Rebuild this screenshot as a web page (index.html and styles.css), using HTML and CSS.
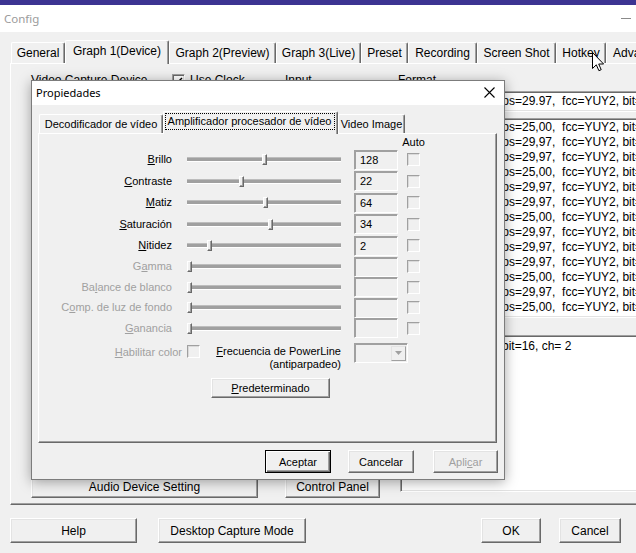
FILE: index.html
```html
<!DOCTYPE html>
<html lang="es">
<head>
<meta charset="utf-8">
<title>Config</title>
<link rel="stylesheet" href="styles.css">
</head>
<body>
<div class="win">
  <div class="titlebar"><span class="title">Config</span><span class="min"></span></div>
  <div class="tabs">
    <div class="tab t1">General</div>
    <div class="tab t2 sel">Graph 1(Device)</div>
    <div class="tab t3">Graph 2(Preview)</div>
    <div class="tab t4">Graph 3(Live)</div>
    <div class="tab t5">Preset</div>
    <div class="tab t6">Recording</div>
    <div class="tab t7">Screen Shot</div>
    <div class="tab t8">Hotkey</div>
    <div class="tab t9">Advanced</div>
  </div>
  <div class="pane">
    <div class="cap-head">
      <span class="h-dev">Video Capture Device</span>
      <span class="h-clock"><span class="chk on"><svg viewBox="0 0 11 11" width="11" height="11"><path d="M2 5.5l2.2 2.3L9 3" fill="none" stroke="#000" stroke-width="1.4"/></svg></span>Use Clock</span>
      <span class="h-input">Input</span>
      <span class="h-format">Format</span>
    </div>
    <div class="cap-body">
      <div class="cap-left">
        <button class="btn b-audio">Audio Device Setting</button>
        <button class="btn b-cp">Control Panel</button>
      </div>
      <div class="cap-right">
        <div class="combo"><span class="pre">720x480,</span>fps=29.97,&nbsp; fcc=YUY2, bit=16</div>
        <div class="list">
          <div class="lrow"><span class="pre">720x576,</span>fps=25,00,&nbsp; fcc=YUY2, bit=16</div>
          <div class="lrow"><span class="pre">720x480,</span>fps=29,97,&nbsp; fcc=YUY2, bit=16</div>
          <div class="lrow"><span class="pre">640x480,</span>fps=29,97,&nbsp; fcc=YUY2, bit=16</div>
          <div class="lrow"><span class="pre">768x576,</span>fps=25,00,&nbsp; fcc=YUY2, bit=16</div>
          <div class="lrow"><span class="pre">320x240,</span>fps=29,97,&nbsp; fcc=YUY2, bit=16</div>
          <div class="lrow"><span class="pre">352x240,</span>fps=29,97,&nbsp; fcc=YUY2, bit=16</div>
          <div class="lrow"><span class="pre">352x288,</span>fps=25,00,&nbsp; fcc=YUY2, bit=16</div>
          <div class="lrow"><span class="pre">160x120,</span>fps=29,97,&nbsp; fcc=YUY2, bit=16</div>
          <div class="lrow"><span class="pre">176x144,</span>fps=29,97,&nbsp; fcc=YUY2, bit=16</div>
          <div class="lrow"><span class="pre">640x360,</span>fps=29,97,&nbsp; fcc=YUY2, bit=16</div>
          <div class="lrow"><span class="pre">720x288,</span>fps=25,00,&nbsp; fcc=YUY2, bit=16</div>
          <div class="lrow"><span class="pre">720x240,</span>fps=29,97,&nbsp; fcc=YUY2, bit=16</div>
          <div class="lrow"><span class="pre">704x576,</span>fps=25,00,&nbsp; fcc=YUY2, bit=16</div>
        </div>
        <div class="field"><span class="pre pre-f">48000Hz,</span>bit=16, ch= 2</div>
      </div>
    </div>
  </div>
  <div class="footer">
    <button class="btn f-help">Help</button>
    <button class="btn f-desk">Desktop Capture Mode</button>
    <span class="grow"></span>
    <button class="btn f-ok">OK</button>
    <button class="btn f-cancel">Cancel</button>
  </div>
</div>

<div class="dlg">
  <div class="dlg-title">
    <span class="dlg-name">Propiedades</span>
    <svg class="dlg-close" viewBox="0 0 11 11" width="11" height="11"><path d="M0.5 0.5L10.5 10.5M10.5 0.5L0.5 10.5" stroke="#000" stroke-width="1.1"/></svg>
  </div>
  <div class="dlg-body">
    <div class="itabs">
      <div class="itab i1">Decodificador de vídeo</div>
      <div class="itab i2 sel"><span class="focus">Amplificador procesador de vídeo</span></div>
      <div class="itab i3">Video Image</div>
    </div>
    <div class="ipane">
      <div class="props">
        <span class="auto">Auto</span>

        <span class="lbl"><u>B</u>rillo</span>
        <span class="slider"><span class="thumb" style="left:75px"></span></span>
        <span class="edit">128</span>
        <span class="cb"></span>

        <span class="lbl"><u>C</u>ontraste</span>
        <span class="slider"><span class="thumb" style="left:52px"></span></span>
        <span class="edit">22</span>
        <span class="cb"></span>

        <span class="lbl"><u>M</u>atiz</span>
        <span class="slider"><span class="thumb" style="left:76px"></span></span>
        <span class="edit">64</span>
        <span class="cb"></span>

        <span class="lbl"><u>S</u>aturación</span>
        <span class="slider"><span class="thumb" style="left:81px"></span></span>
        <span class="edit">34</span>
        <span class="cb"></span>

        <span class="lbl"><u>N</u>itidez</span>
        <span class="slider"><span class="thumb" style="left:20px"></span></span>
        <span class="edit">2</span>
        <span class="cb"></span>

        <span class="lbl dis">G<u>a</u>mma</span>
        <span class="slider"><span class="thumb" style="left:0px"></span></span>
        <span class="edit"></span>
        <span class="cb"></span>

        <span class="lbl dis">Ba<u>l</u>ance de blanco</span>
        <span class="slider"><span class="thumb" style="left:0px"></span></span>
        <span class="edit"></span>
        <span class="cb"></span>

        <span class="lbl dis">C<u>o</u>mp. de luz de fondo</span>
        <span class="slider"><span class="thumb" style="left:0px"></span></span>
        <span class="edit"></span>
        <span class="cb"></span>

        <span class="lbl dis"><u>G</u>anancia</span>
        <span class="slider"><span class="thumb" style="left:0px"></span></span>
        <span class="edit"></span>
        <span class="cb"></span>

        <span class="lbl dis last"><u>H</u>abilitar color</span>
        <span class="lastmid">
          <span class="cb"></span>
          <span class="freq"><u>F</u>recuencia de PowerLine<br>(antiparpadeo)</span>
        </span>
        <span class="dcombo"><span class="arrow"><svg viewBox="0 0 7 4" width="7" height="4"><path d="M0 0h7L3.5 4z" fill="#a0a0a0"/></svg></span></span>
      </div>
      <button class="dbtn predet"><u>P</u>redeterminado</button>
    </div>
    <div class="dbtns">
      <button class="dbtn def">Aceptar</button>
      <button class="dbtn">Cancelar</button>
      <button class="dbtn dis">Apli<u>c</u>ar</button>
    </div>
  </div>
</div>

<svg class="cursor" viewBox="0 0 13 20" width="13" height="20"><path d="M0.5 0.5V16.5L4.3 12.8L6.9 18.7L9.2 17.7L6.7 12H11.6Z" fill="#fff" stroke="#000" stroke-width="1"/></svg>
</body>
</html>
```
FILE: styles.css
```css
* { box-sizing: border-box; }
html, body { margin: 0; padding: 0; }
body {
  width: 636px; height: 553px; overflow: hidden; position: relative;
  background: #f0f0f0; color: #000;
  font-family: "Liberation Sans", Arial, sans-serif; font-size: 12px;
}
button { font: inherit; color: inherit; margin: 0; padding: 0; }

.win { width: 636px; height: 553px; display: flex; flex-direction: column; }

.titlebar {
  flex: none; height: 32px; border-top: 5px solid #3c3492; background: #fff;
  display: flex; align-items: center; padding-left: 4px;
}
.titlebar .title { flex: 1; font-family: "Noto Sans", sans-serif; font-size: 11.5px; color: #9b9b9b; }
.titlebar .min { width: 10px; height: 1px; background: #8a8a8a; margin-right: 5px; }

/* classic outer tabs */
.tabs {
  flex: none; display: flex; height: 24px; margin-top: 8px; margin-bottom: -1px;
  padding-left: 11px; position: relative; z-index: 2;
}
.tab {
  flex: none; height: 21px; margin-top: 2px; white-space: nowrap;
  display: flex; align-items: center; justify-content: center;
  border-top: 1px solid #fff; border-left: 1px solid #fff; border-right: 1px solid #696969;
  box-shadow: inset -1px 0 #a0a0a0; border-radius: 2px 2px 0 0;
}
.tab.sel { height: 24px; margin-top: 0; background: #f0f0f0; padding-bottom: 3px; }
.t1 { width: 54px; }
.t2 { width: 104px; }
.t3 { width: 107px; }
.t4 { width: 85px; }
.t5 { width: 47px; }
.t6 { width: 69px; }
.t7 { width: 79px; }
.t8 { width: 50px; }
.t9 { width: 70px; justify-content: flex-start; padding-left: 6px; }

.pane {
  flex: none; margin-left: 10px; width: 640px; height: 442px;
  border: 1px solid; border-color: #fff #696969 #696969 #fff;
  box-shadow: inset -1px -1px #a0a0a0;
  padding: 9px 0 0 20px; display: flex; flex-direction: column;
}
.cap-head { flex: none; display: flex; height: 14px; line-height: 14px; white-space: nowrap; }
.h-dev { width: 141px; }
.h-clock { width: 113px; display: flex; align-items: center; }
.h-input { width: 113px; }
.chk {
  width: 13px; height: 13px; margin-right: 5px; background: #fff;
  border: 1px solid; border-color: #a0a0a0 #fff #fff #a0a0a0;
  box-shadow: inset 1px 1px #696969, inset -1px -1px #e3e3e3;
  display: flex; align-items: center; justify-content: center;
}
.chk svg { display: block; }

.cap-body { flex: 1; display: flex; min-height: 0; }
.cap-left { flex: none; width: 369px; display: flex; align-items: flex-end; gap: 27px; padding-bottom: 6px; }
.cap-right { flex: 1; min-width: 0; display: flex; flex-direction: column; padding-bottom: 12px; }

.btn {
  background: #f0f0f0; border: 1px solid; border-color: #fff #696969 #696969 #fff;
  box-shadow: inset -1px -1px #a0a0a0, inset 1px 1px #e3e3e3;
  display: flex; align-items: center; justify-content: center; white-space: nowrap;
}
.b-audio { width: 227px; height: 22px; }
.b-cp { width: 95px; height: 22px; }

.combo, .list, .field {
  flex: none; background: #fff; white-space: nowrap; overflow: hidden;
  border: 1px solid; border-color: #a0a0a0 #fff #fff #a0a0a0;
  box-shadow: inset 1px 1px #696969, inset -1px -1px #e3e3e3;
  padding-left: 2px;
}
.combo { margin-top: 4px; height: 21px; line-height: 19px; }
.list { margin-top: 6px; height: 200px; padding-top: 1px; }
.lrow { height: 15px; line-height: 15px; }
.field { margin-top: 17px; flex: 1; padding-top: 3px; line-height: 14px; }
.pre { display: inline-block; width: 96px; overflow: hidden; vertical-align: top; }
.pre-f { width: 99px; }

.footer { flex: none; display: flex; margin-top: 13px; padding: 0 15px 0 10px; gap: 21px; }
.footer .btn { height: 25px; }
.f-help { width: 127px; }
.f-desk { width: 148px; }
.grow { flex: 1; }
.f-ok { width: 60px; margin-right: -3px; }
.f-cancel { width: 62px; }

/* property dialog */
.dlg {
  position: absolute; left: 31px; top: 80px; width: 474px; height: 400px; z-index: 5;
  border: 1px solid #7c7c7c; background: #f0f0f0;
  box-shadow: 0 2px 12px rgba(0,0,0,0.35);
  display: flex; flex-direction: column;
  font-size: 11px;
}
.dlg-title { flex: none; height: 24px; background: #fff; display: flex; align-items: center; padding: 0 9px 2px 4px; }
.dlg-name { flex: 1; font-family: "Noto Sans", sans-serif; font-size: 11px; }
.dlg-close { display: block; margin-top: 1px; }
.dlg-body { flex: 1; padding: 6px 7px 0 6px; display: flex; flex-direction: column; }

.itabs { flex: none; display: flex; height: 23px; margin-bottom: -1px; padding-left: 1px; position: relative; z-index: 2; }
.itab {
  flex: none; height: 19px; margin-top: 3px; white-space: nowrap;
  display: flex; align-items: center; justify-content: center;
  border-top: 1px solid #fff; border-left: 1px solid #fff; border-right: 1px solid #696969;
  box-shadow: inset -1px 0 #a0a0a0; border-radius: 2px 2px 0 0;
}
.itab.sel { height: 23px; margin-top: 0; background: #f0f0f0; padding-bottom: 3px; }
.i1 { width: 124px; }
.i2 { width: 175px; }
.i3 { width: 67px; }
.focus { display: block; width: 170px; height: 17px; line-height: 15px; text-align: center; border: 1px dotted #000; margin-left: -2px; }

.ipane {
  flex: none; width: 459px; height: 310px;
  border: 1px solid; border-color: #fff #696969 #696969 #fff;
  box-shadow: inset -1px -1px #a0a0a0;
  padding: 2px 0 0 1px;
}
.props {
  display: grid;
  grid-template-columns: 147px 167px 53px 13px;
  grid-template-rows: 13px repeat(5, 21.5px) repeat(4, 20.5px) 33px;
  align-items: center;
  line-height: 13px;
}
.auto { grid-column: 4; justify-self: center; white-space: nowrap; }
.lbl { grid-column: 1; text-align: right; padding-right: 15px; white-space: nowrap; }
.lbl.dis { color: #a0a0a0; }
.lbl.last { align-self: start; margin-top: 7px; padding-right: 5px; }
.slider { position: relative; width: 154px; height: 11px; display: block; }
.slider::before {
  content: ""; position: absolute; left: 0; right: 0; top: 4px; height: 3px;
  background: #a0a0a0; border-bottom: 1px solid #fff; box-shadow: 0 -1px #bdbdbd;
}
.thumb {
  position: absolute; top: 0; width: 5px; height: 11px; background: #f0f0f0;
  border-top: 1px solid #fff; border-left: 1px solid #fff;
  border-right: 1px solid #696969; border-bottom: 1px solid #696969;
  box-shadow: inset -1px -1px #a0a0a0;
}
.edit {
  width: 44px; height: 20px; padding-left: 5px; line-height: 18px;
  border: 1px solid; border-color: #a0a0a0 #fff #fff #a0a0a0;
  box-shadow: inset 1px 1px #a0a0a0;
}
.cb {
  display: block; width: 13px; height: 13px;
  border: 1px solid; border-color: #a0a0a0 #fff #fff #a0a0a0;
  box-shadow: inset 1px 1px #dadada;
}
.lastmid { grid-column: 2; align-self: start; width: 154px; display: flex; justify-content: space-between; padding-top: 6px; }
.freq { text-align: right; }
.dcombo {
  grid-column: 3 / span 2; align-self: start; margin-top: 4px;
  width: 54px; height: 20px; display: flex; justify-content: flex-end; padding: 2px 1px 1px 0;
  border: 1px solid; border-color: #a0a0a0 #fff #fff #a0a0a0;
  box-shadow: inset 1px 1px #a0a0a0;
}
.arrow {
  width: 15px; height: 100%; background: #f0f0f0;
  border: 1px solid; border-color: #e3e3e3 #a0a0a0 #a0a0a0 #e3e3e3;
  display: flex; align-items: center; justify-content: center;
}
.arrow svg { display: block; }

.dbtn {
  background: #f0f0f0; border: 1px solid; border-color: #fff #696969 #696969 #fff;
  box-shadow: inset -1px -1px #a0a0a0, inset 1px 1px #e3e3e3;
  display: flex; align-items: center; justify-content: center; white-space: nowrap;
  font-size: 11px;
}
.predet { width: 119px; height: 20px; margin: 6px 0 0 171px; }
.dbtns { flex: none; display: flex; justify-content: flex-end; margin: 7px -1px 0 0; }
.dbtns .dbtn { width: 66px; height: 23px; margin-left: 17px; }
.dbtns .dbtn:last-child { width: 65px; margin-left: 19px; }
.dbtn.def { border-color: #000; box-shadow: inset 1px 1px #fff, inset -1px -1px #696969, inset -2px -2px #a0a0a0; }
.dbtn.dis { color: #a0a0a0; }

.cursor { position: absolute; left: 592px; top: 52px; z-index: 10; display: block; }
```
